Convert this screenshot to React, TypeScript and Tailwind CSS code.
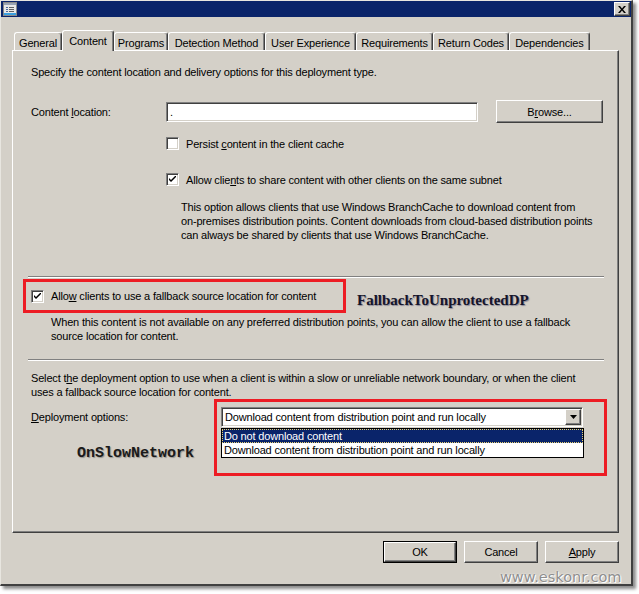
import { ReactNode } from "react";

// classic 3D edges
const raised =
  "border border-t-white border-l-white border-r-[#404040] border-b-[#404040] shadow-[inset_-1px_-1px_0_#808080]";
const sunken =
  "border border-t-[#808080] border-l-[#808080] border-r-white border-b-white shadow-[inset_1px_1px_0_#404040,inset_-1px_-1px_0_#d4d0c8]";

const tabs = [
  { label: "General", w: "w-[48px]" },
  { label: "Content", w: "w-[52px]", active: true },
  { label: "Programs", w: "w-[54px]" },
  { label: "Detection Method", w: "w-[97px]" },
  { label: "User Experience", w: "w-[91px]" },
  { label: "Requirements", w: "w-[77px]" },
  { label: "Return Codes", w: "w-[76px]" },
  { label: "Dependencies", w: "w-[81px]" },
];

function Check({ checked }: { checked?: boolean }) {
  return (
    <div className={`w-[13px] h-[13px] shrink-0 bg-white ${sunken} flex items-center justify-center`}>
      {checked && (
        <svg width="7" height="7" viewBox="0 0 7 7">
          <path d="M0 2 L0 4 L2 6 L7 1 L7 -1 L2 4 Z" fill="#000" />
        </svg>
      )}
    </div>
  );
}

function Button({ children, def }: { children: ReactNode; def?: boolean }) {
  if (def) {
    return (
      <div className="w-[74px] h-[22px] border border-black">
        <div className={`w-full h-full ${raised} flex items-center justify-center`}>{children}</div>
      </div>
    );
  }
  return <div className={`w-[74px] h-[22px] ${raised} flex items-center justify-center`}>{children}</div>;
}

function Separator({ mt }: { mt: string }) {
  return <div className={`${mt} ml-[15px] w-[576px] border-t border-t-[#808080] border-b border-b-white`} />;
}

export default function App() {
  return (
    <div className="w-[639px] h-[594px] bg-white font-['Liberation_Sans',Arial,sans-serif] text-[11px] leading-[14px] tracking-[-0.17px] text-black">
      <div className="relative w-[633px] h-[586px] bg-[#d4d0c8] border-t border-l border-r-2 border-b-2 border-t-[#e8e6e0] border-l-[#e8e6e0] border-r-[#404040] border-b-[#404040] shadow-[3px_3px_3px_rgba(0,0,0,0.45)] flex flex-col">
        {/* title bar */}
        <div className="h-[16px] bg-[#0a246a] flex items-center justify-between pl-[2px] pr-[1px]">
          <svg width="14" height="14" viewBox="0 0 14 14">
            <rect x="0.5" y="0.5" width="13" height="13" fill="#e8e8e8" stroke="#8a8a8a" />
            <rect x="1" y="1" width="12" height="2" fill="#9aa4b4" />
            <rect x="3" y="5" width="2" height="1" fill="#4a6aa0" />
            <rect x="6" y="5" width="5" height="1" fill="#606060" />
            <rect x="3" y="7" width="2" height="1" fill="#4a6aa0" />
            <rect x="6" y="7" width="5" height="1" fill="#606060" />
            <rect x="3" y="9" width="2" height="1" fill="#4a6aa0" />
            <rect x="6" y="9" width="5" height="1" fill="#606060" />
            <rect x="1" y="11" width="12" height="2" fill="#3aa0e0" />
          </svg>
          <div className={`w-[16px] h-[14px] bg-[#d4d0c8] ${raised} flex items-center justify-center`}>
            <svg width="8" height="7" viewBox="0 0 8 7">
              <path d="M0 0 H2 L4 2.5 L6 0 H8 L5 3.5 L8 7 H6 L4 4.5 L2 7 H0 L3 3.5 Z" fill="#000" />
            </svg>
          </div>
        </div>

        {/* tab strip */}
        <div className="mt-[13px] ml-[13px] flex items-end h-[21px] -mb-[1px]">
          {tabs.map((t) =>
            t.active ? (
              <div
                key={t.label}
                className={`${t.w} relative z-10 h-[21px] bg-[#d4d0c8] border-t border-l border-r border-t-white border-l-white border-r-[#404040] rounded-t-[3px] shadow-[inset_-1px_0_0_#808080] flex justify-center pt-[3px]`}
              >
                {t.label}
              </div>
            ) : (
              <div
                key={t.label}
                className={`${t.w} h-[19px] border-t border-l border-r border-t-white border-l-white border-r-[#404040] rounded-t-[3px] shadow-[inset_-1px_0_0_#808080] flex justify-center pt-[3px]`}
              >
                {t.label}
              </div>
            )
          )}
        </div>

        {/* tab page */}
        <div className="ml-[11px] w-[607px] h-[483px] border-t border-l border-r border-b border-t-white border-l-white border-r-[#404040] border-b-[#404040] shadow-[inset_-1px_-1px_0_#808080] flex flex-col">
          <div className="mt-[14px] ml-[18px]">
            Specify the content location and delivery options for this deployment type.
          </div>

          <div className="mt-[21px] h-[23px] flex items-center">
            <div className="ml-[18px] w-[135px]">
              Content <span className="underline">l</span>ocation:
            </div>
            <div className={`w-[312px] h-[20px] bg-white ${sunken} flex items-center pl-[3px]`}>.</div>
            <div className="ml-[18px]">
              <div className={`w-[107px] h-[23px] ${raised} flex items-center justify-center`}>
                <span>
                  B<span className="underline">r</span>owse...
                </span>
              </div>
            </div>
          </div>

          <div className="mt-[14px] ml-[153px] h-[13px] flex items-center gap-[7px]">
            <Check />
            <span>
              Persist <span className="underline">c</span>ontent in the client cache
            </span>
          </div>

          <div className="mt-[23px] ml-[153px] h-[13px] flex items-center gap-[7px]">
            <Check checked />
            <span>
              Allow clie<span className="underline">n</span>ts to share content with other clients on the same subnet
            </span>
          </div>

          <div className="mt-[14px] ml-[168px]">
            This option allows clients that use Windows BranchCache to download content from
            <br />
            on-premises distribution points. Content downloads from cloud-based distribution points
            <br />
            can always be shared by clients that use Windows BranchCache.
          </div>

          <Separator mt="mt-[34px]" />

          <div className="mt-[1px] ml-[10px] flex items-start">
            <div className="w-[323px] h-[34px] border-[3px] border-[#ed1c24] flex items-center pl-[5px] gap-[7px]">
              <Check checked />
              <span>
                Allo<span className="underline">w</span> clients to use a fallback source location for content
              </span>
            </div>
            <div className="ml-[11px] mt-[12px] font-['Liberation_Serif',serif] font-bold text-[15px] leading-[18px] tracking-normal text-[#14142a] [text-shadow:1px_1px_1px_rgba(0,0,60,0.35)]">
              FallbackToUnprotectedDP
            </div>
          </div>

          <div className="mt-[2px] ml-[38px]">
            When this content is not available on any preferred distribution points, you can allow the client to use a fallback
            <br />
            source location for content.
          </div>

          <Separator mt="mt-[16px]" />

          <div className="mt-[10px] ml-[18px]">
            Select t<span className="underline">h</span>e deployment option to use when a client is within a slow or unreliable network boundary, or when the client
            <br />
            uses a fallback source location for content.
          </div>

          <div className="flex">
            <div className="w-[201px] flex flex-col">
              <div className="mt-[11px] ml-[18px]">
                <span className="underline">D</span>eployment options:
              </div>
              <div className="mt-[21px] ml-[64px] font-['Liberation_Mono',monospace] font-bold text-[15px] leading-[18px] tracking-normal text-[#1a1a1a] [text-shadow:1px_1px_1px_rgba(0,0,0,0.3)]">
                OnSlowNetwork
              </div>
            </div>
            <div className="w-[393px] h-[77px] border-[3px] border-[#ed1c24] pl-[4px] pt-[5px]">
              <div className={`w-[362px] h-[20px] bg-white ${sunken} flex items-center justify-between pl-[3px] pr-[1px]`}>
                <span>Download content from distribution point and run locally</span>
                <div className={`w-[16px] h-[16px] bg-[#d4d0c8] ${raised} flex items-center justify-center`}>
                  <svg width="7" height="4" viewBox="0 0 7 4">
                    <path d="M0 0 H7 L3.5 4 Z" fill="#000" />
                  </svg>
                </div>
              </div>
              <div className="mt-[1px] w-[363px] border border-black bg-white">
                <div className="h-[14px] bg-[#0a246a] text-white pl-[2px] outline-1 outline-dotted outline-[#e8d070] -outline-offset-1 flex items-center">
                  Do not download content
                </div>
                <div className="h-[14px] pl-[2px] flex items-center">
                  Download content from distribution point and run locally
                </div>
              </div>
            </div>
          </div>
        </div>

        {/* dialog buttons */}
        <div className="mt-[8px] ml-[11px] w-[607px] flex justify-end gap-[7px]">
          <Button def>OK</Button>
          <Button>Cancel</Button>
          <Button>
            <span>
              <span className="underline">A</span>pply
            </span>
          </Button>
        </div>

        <div className="absolute left-[499px] top-[568px] font-['DejaVu_Sans',sans-serif] text-[14.5px] leading-[16px] tracking-normal text-[#8e8e8e] [text-shadow:0_0_2px_#fff,1px_1px_0_#fff]">
          www.eskonr.com
        </div>
      </div>
    </div>
  );
}
